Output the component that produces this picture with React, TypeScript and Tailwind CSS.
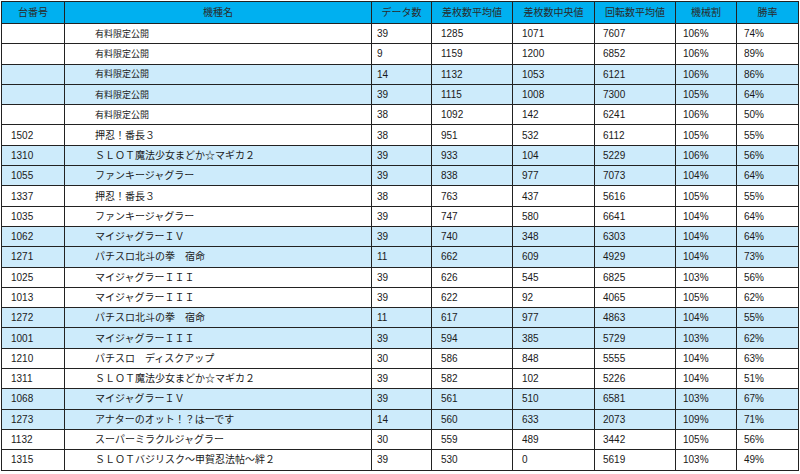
type Row = {
  no: string
  name: string
  count: number
  avg: number
  median: number
  spins: number
  rate: string
  win: string
}

const ROWS: Row[] = [
  { no: '', name: '有料限定公開', count: 39, avg: 1285, median: 1071, spins: 7607, rate: '106%', win: '74%' },
  { no: '', name: '有料限定公開', count: 9, avg: 1159, median: 1200, spins: 6852, rate: '106%', win: '89%' },
  { no: '', name: '有料限定公開', count: 14, avg: 1132, median: 1053, spins: 6121, rate: '106%', win: '86%' },
  { no: '', name: '有料限定公開', count: 39, avg: 1115, median: 1008, spins: 7300, rate: '105%', win: '64%' },
  { no: '', name: '有料限定公開', count: 38, avg: 1092, median: 142, spins: 6241, rate: '106%', win: '50%' },
  { no: '1502', name: '押忍！番長３', count: 38, avg: 951, median: 532, spins: 6112, rate: '105%', win: '55%' },
  { no: '1310', name: 'ＳＬＯＴ魔法少女まどか☆マギカ２', count: 39, avg: 933, median: 104, spins: 5229, rate: '106%', win: '56%' },
  { no: '1055', name: 'ファンキージャグラー', count: 39, avg: 838, median: 977, spins: 7073, rate: '104%', win: '64%' },
  { no: '1337', name: '押忍！番長３', count: 38, avg: 763, median: 437, spins: 5616, rate: '105%', win: '55%' },
  { no: '1035', name: 'ファンキージャグラー', count: 39, avg: 747, median: 580, spins: 6641, rate: '104%', win: '64%' },
  { no: '1062', name: 'マイジャグラーＩＶ', count: 39, avg: 740, median: 348, spins: 6303, rate: '104%', win: '64%' },
  { no: '1271', name: 'パチスロ北斗の拳　宿命', count: 11, avg: 662, median: 609, spins: 4929, rate: '104%', win: '73%' },
  { no: '1025', name: 'マイジャグラーＩＩＩ', count: 39, avg: 626, median: 545, spins: 6825, rate: '103%', win: '56%' },
  { no: '1013', name: 'マイジャグラーＩＩＩ', count: 39, avg: 622, median: 92, spins: 4065, rate: '105%', win: '62%' },
  { no: '1272', name: 'パチスロ北斗の拳　宿命', count: 11, avg: 617, median: 977, spins: 4863, rate: '104%', win: '55%' },
  { no: '1001', name: 'マイジャグラーＩＩＩ', count: 39, avg: 594, median: 385, spins: 5729, rate: '103%', win: '62%' },
  { no: '1210', name: 'パチスロ　ディスクアップ', count: 30, avg: 586, median: 848, spins: 5555, rate: '104%', win: '63%' },
  { no: '1311', name: 'ＳＬＯＴ魔法少女まどか☆マギカ２', count: 39, avg: 582, median: 102, spins: 5226, rate: '104%', win: '51%' },
  { no: '1068', name: 'マイジャグラーＩＶ', count: 39, avg: 561, median: 510, spins: 6581, rate: '103%', win: '67%' },
  { no: '1273', name: 'アナターのオット！？はーです', count: 14, avg: 560, median: 633, spins: 2073, rate: '109%', win: '71%' },
  { no: '1132', name: 'スーパーミラクルジャグラー', count: 30, avg: 559, median: 489, spins: 3442, rate: '105%', win: '56%' },
  { no: '1315', name: 'ＳＬＯＴバジリスク～甲賀忍法帖～絆２', count: 39, avg: 530, median: 0, spins: 5619, rate: '103%', win: '49%' },
]

const HEADERS = ['台番号', '機種名', 'データ数', '差枚数平均値', '差枚数中央値', '回転数平均値', '機械割', '勝率']

const th = 'border border-[#222] bg-[#00b0f0] text-center font-normal text-[10px] text-[#2a2a2a]'
const td = 'border border-[#222] text-left text-[10px] text-[#1a1a1a] whitespace-nowrap'

export default function App() {
  return (
    <div className="min-h-[474px] w-[800px] bg-white pl-[1px] pt-[1px] font-['Liberation_Sans','Noto_Sans_CJK_JP',sans-serif]">
      <table className="w-[797px] table-fixed border-collapse">
        <colgroup>
          <col className="w-[63px]" />
          <col className="w-[307px]" />
          <col className="w-[60px]" />
          <col className="w-[81px]" />
          <col className="w-[82px]" />
          <col className="w-[81px]" />
          <col className="w-[61px]" />
          <col className="w-[62px]" />
        </colgroup>
        <thead>
          <tr className="h-[22px]">
            {HEADERS.map(h => (
              <th key={h} className={th}>{h}</th>
            ))}
          </tr>
        </thead>
        <tbody>
          {ROWS.map((r, i) => {
            const blue = i % 4 >= 2
            return (
              <tr key={i} className={`h-[20.3px] ${blue ? 'bg-[#cdebfb]' : 'bg-white'}`}>
                <td className={`${td} pl-[9px]`}>{r.no}</td>
                <td className={`${td} pl-[30px]`}>
                  {r.no ? r.name : <span className="text-[9px]">{r.name}</span>}
                </td>
                <td className={`${td} pl-[5px]`}>{r.count}</td>
                <td className={`${td} pl-[9px]`}>{r.avg}</td>
                <td className={`${td} pl-[9px]`}>{r.median}</td>
                <td className={`${td} pl-[8px]`}>{r.spins}</td>
                <td className={`${td} pl-[7px]`}>{r.rate}</td>
                <td className={`${td} pl-[7px]`}>{r.win}</td>
              </tr>
            )
          })}
        </tbody>
      </table>
    </div>
  )
}
